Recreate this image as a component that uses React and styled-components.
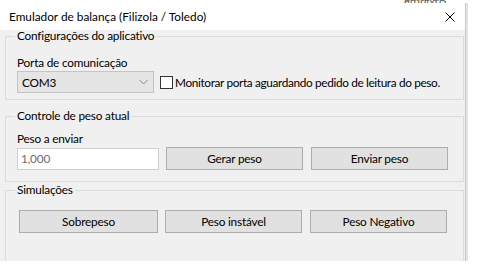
import React from 'react';
import styled, { createGlobalStyle } from 'styled-components';

const GlobalStyle = createGlobalStyle`
  html, body {
    margin: 0;
    padding: 0;
    background: #ffffff;
  }
  body {
    font-family: Lato, 'Open Sans', sans-serif;
    font-size: 11.8px;
    letter-spacing: -0.2px;
    color: #000;
  }
`;

const Backdrop = styled.div`
  height: 3px;
  overflow: hidden;
  padding-left: 404px;
  color: #666;
  line-height: 3px;

  span {
    display: block;
    margin-top: -5px;
  }
`;

const Window = styled.div`
  width: 465px;
  height: 258px;
  overflow: hidden;
  background: #f0f0f0;
  border-right: 1px solid #c9c9c9;
  box-shadow: 2px 0 0 #e4e4e4;
  display: flex;
  flex-direction: column;
`;

const TitleBar = styled.div`
  height: 27px;
  flex-shrink: 0;
  background: #ffffff;
  display: flex;
  align-items: center;
  justify-content: space-between;
  padding: 0 10px 0 9px;
`;

const Title = styled.span`
  line-height: 15px;
  letter-spacing: 0;
`;

const CloseIcon = styled.svg`
  width: 10px;
  height: 10px;
`;

const Client = styled.div`
  display: flex;
  flex-direction: column;
`;

const Group = styled.fieldset`
  margin: ${(p) => p.$top || 0}px 1px 0 5px;
  padding: ${(p) => p.$padTop}px 11px ${(p) => p.$padBottom}px 11px;
  border: 1px solid #dcdcdc;
  min-width: 0;
`;

const Legend = styled.legend`
  padding: 0 2px;
  margin-left: -2px;
  line-height: 12px;
`;

const FieldLabel = styled.div`
  line-height: 15px;
  margin-bottom: 1px;
`;

const Row = styled.div`
  display: flex;
  align-items: center;
  gap: ${(p) => p.$gap || 8}px;
`;

const Combo = styled.div`
  flex-shrink: 0;
  width: 137px;
  height: 22px;
  box-sizing: border-box;
  background: #e5e5e5;
  border: 1px solid #c4c4c4;
  display: flex;
  align-items: center;
  justify-content: space-between;
  padding: 0 5px 0 4px;
`;

const Chevron = styled.svg`
  width: 9px;
  height: 6px;
`;

const CheckLabel = styled.label`
  display: flex;
  align-items: center;
  gap: 2px;
  white-space: nowrap;
  letter-spacing: -0.35px;
`;

const CheckBox = styled.span`
  flex-shrink: 0;
  width: 13px;
  height: 13px;
  box-sizing: border-box;
  border: 1px solid #333333;
  background: #ffffff;
`;

const TextInput = styled.div`
  flex-shrink: 0;
  width: 142px;
  height: 22px;
  box-sizing: border-box;
  background: #ffffff;
  border: 1px solid #d0d0d0;
  color: #6d6d6d;
  display: flex;
  align-items: center;
  padding-left: 3px;
  margin-right: -1px;
`;

const Button = styled.button`
  flex-shrink: 0;
  width: ${(p) => p.$w || 137}px;
  height: 23px;
  box-sizing: border-box;
  background: #e1e1e1;
  border: 1px solid #adadad;
  font-family: inherit;
  font-size: inherit;
  letter-spacing: inherit;
  color: #000;
  padding: 0;
`;

const SimRow = styled(Row)`
  padding-left: 2px;
  gap: 7px;

  & > button + button + button {
    margin-left: 1px;
  }
`;

export default function App() {
  return (
    <>
      <GlobalStyle />
      <Backdrop>
        <span>parta de arquivos</span>
      </Backdrop>
      <Window>
        <TitleBar>
          <Title>Emulador de balança (Filizola / Toledo)</Title>
          <CloseIcon viewBox="0 0 10 10">
            <path d="M0.5 0.5 L9.5 9.5 M9.5 0.5 L0.5 9.5" stroke="#000" strokeWidth="1" />
          </CloseIcon>
        </TitleBar>
        <Client>
          <Group $padTop={13} $padBottom={6}>
            <Legend>Configurações do aplicativo</Legend>
            <FieldLabel>Porta de comunicação</FieldLabel>
            <Row $gap={6}>
              <Combo>
                <span>COM3</span>
                <Chevron viewBox="0 0 9 6">
                  <path d="M0.5 1 L4.5 5 L8.5 1" fill="none" stroke="#888" strokeWidth="1" />
                </Chevron>
              </Combo>
              <CheckLabel>
                <CheckBox />
                <span>Monitorar porta aguardando pedido de leitura do peso.</span>
              </CheckLabel>
            </Row>
          </Group>

          <Group $top={10} $padTop={9} $padBottom={11}>
            <Legend>Controle de peso atual</Legend>
            <FieldLabel>Peso a enviar</FieldLabel>
            <Row>
              <TextInput>1,000</TextInput>
              <Button>Gerar peso</Button>
              <Button>Enviar peso</Button>
            </Row>
          </Group>

          <Group $top={2} $padTop={14} $padBottom={30}>
            <Legend>Simulações</Legend>
            <SimRow>
              <Button $w={139}>Sobrepeso</Button>
              <Button>Peso instável</Button>
              <Button>Peso Negativo</Button>
            </SimRow>
          </Group>
        </Client>
      </Window>
    </>
  );
}
